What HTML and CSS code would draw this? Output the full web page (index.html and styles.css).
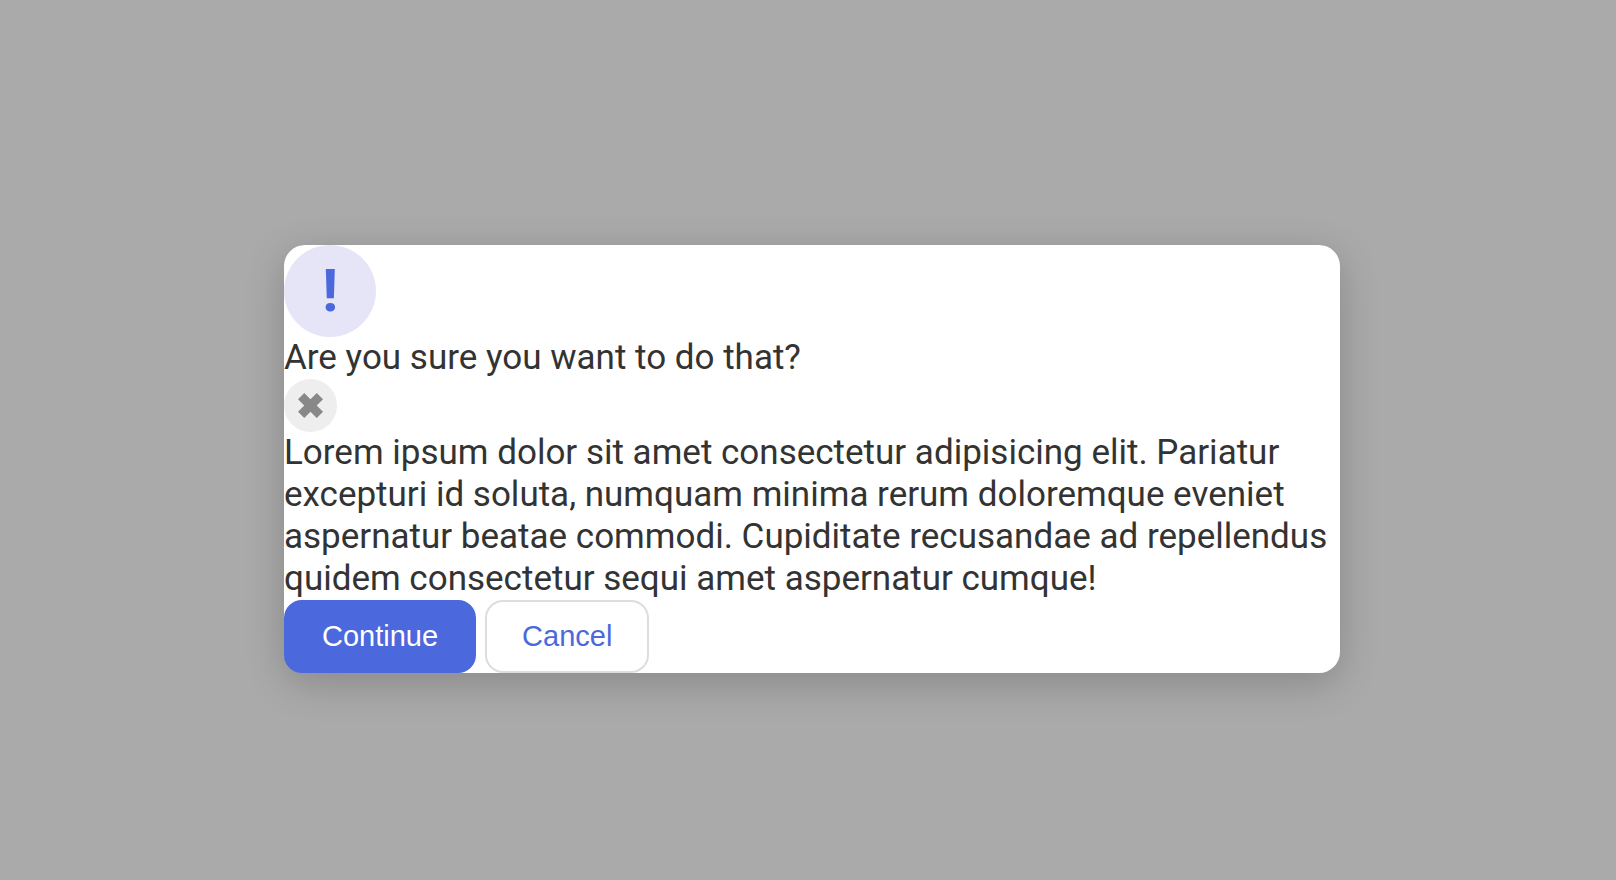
FILE: index.html
```html
<!DOCTYPE html>
<html lang="en">
<head>
<meta charset="utf-8">
<title>Confirm</title>
<link rel="stylesheet" href="styles.css">
</head>
<body>
<main class="modal" role="dialog" aria-labelledby="modal-title">
<div class="modal-icon">!</div>
<div class="modal-header" id="modal-title">Are you sure you want to do that?</div>
<button class="close-button" type="button" aria-label="Close"><svg class="close-glyph" viewBox="1 1 24 24" aria-hidden="true"><path d="M7 1 L13 7 L19 1 L25 7 L19 13 L25 19 L19 25 L13 19 L7 25 L1 19 L7 13 L1 7 Z"/></svg></button>
<p class="modal-text">Lorem ipsum dolor sit amet consectetur adipisicing elit. Pariatur excepturi id soluta, numquam minima rerum doloremque eveniet aspernatur beatae commodi. Cupiditate recusandae ad repellendus quidem consectetur sequi amet aspernatur cumque!</p>
<div class="actions">
<button class="button" type="button">Continue</button>
<button class="button button-outline" type="button">Cancel</button>
</div>
</main>
</body>
</html>
```
FILE: styles.css
```css
* { box-sizing: border-box; }
body {
  margin: 0;
  min-height: 100vh;
  padding: 38px 8px 0 16px;
  display: flex;
  align-items: center;
  justify-content: center;
  background: #aaa;
  color: #333;
  font-family: Roboto, sans-serif;
  font-size: 35px;
  line-height: 42px;
}
.modal {
  width: 100%;
  max-width: 1056px;
  border-radius: 21px;
  background: #fff;
  box-shadow: 0 10px 40px rgba(0, 0, 0, 0.2);
}
.modal-icon {
  display: flex;
  align-items: center;
  justify-content: center;
  width: 92px;
  height: 92px;
  border-radius: 50%;
  background: #e6e4f7;
  color: #4b69dc;
  font-size: 60px;
  font-weight: 700;
}
.close-button {
  display: flex;
  align-items: center;
  justify-content: center;
  width: 53px;
  height: 53px;
  padding: 0;
  border: 0;
  border-radius: 50%;
  background: #eee;
}
.close-glyph { width: 25px; height: 25px; fill: #888; }
.modal-text { margin: 0; }
.actions { display: flex; gap: 9px; }
.button {
  padding: 14px 36px;
  border: 2px solid #4b69dc;
  border-radius: 18px;
  background: #4b69dc;
  color: #fff;
  font-family: "Liberation Sans", Arial, sans-serif;
  font-size: 29px;
  line-height: 41px;
}
.button-outline {
  padding: 14px 35px;
  border-color: #ddd;
  background: #fff;
  color: #4b69dc;
}
```
